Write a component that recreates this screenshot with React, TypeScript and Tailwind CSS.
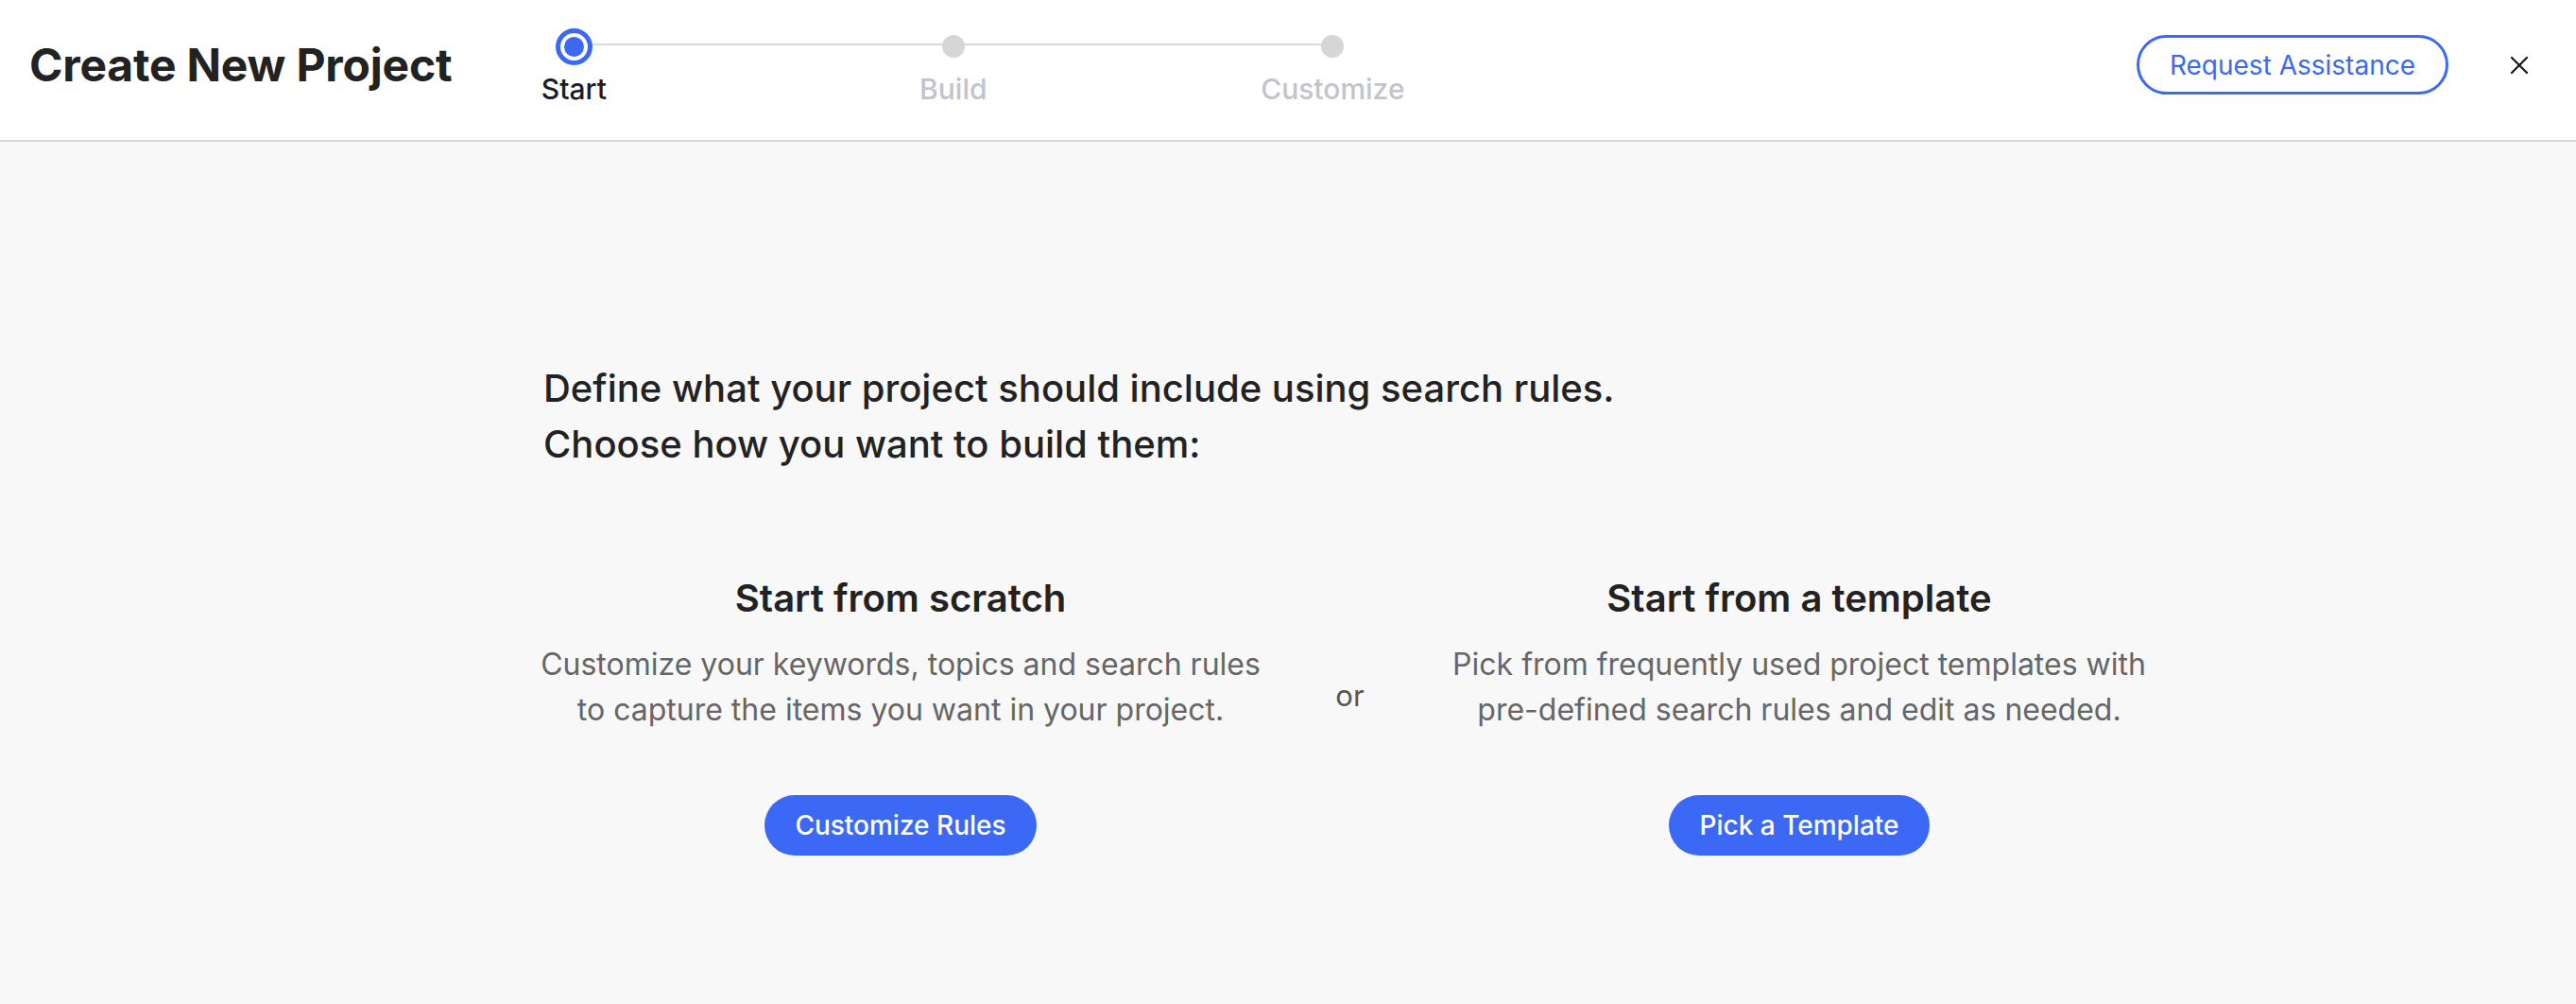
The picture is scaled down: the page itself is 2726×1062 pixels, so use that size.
import { X } from 'lucide-react';

const steps = [
    { id: 'start', label: 'Start', active: true },
    { id: 'build', label: 'Build', active: false },
    { id: 'customize', label: 'Customize', active: false }
];

const options = [
    {
        id: 'scratch',
        title: 'Start from scratch',
        lines: ['Customize your keywords, topics and search rules', 'to capture the items you want in your project.'],
        action: 'Customize Rules'
    },
    {
        id: 'template',
        title: 'Start from a template',
        lines: ['Pick from frequently used project templates with', 'pre-defined search rules and edit as needed.'],
        action: 'Pick a Template'
    }
];

function Stepper() {
    return (
        <div className="relative ml-[59px] flex w-[943px] justify-between pt-[4px]">
            <span className="absolute left-[70px] right-[70px] top-[21px] h-[2px] bg-[#dadada]" aria-hidden="true" />
            {steps.map((step) => (
                <div key={step.id} className="relative flex w-[140px] flex-col items-center">
                    <div className="flex h-[40px] items-center justify-center">
                        {step.active ? (
                            <span className="flex h-[39px] w-[39px] items-center justify-center rounded-full border-[5px] border-[#3b69f5] bg-white">
                                <span className="h-[21px] w-[21px] rounded-full bg-[#3b69f5]" />
                            </span>
                        ) : (
                            <span className="h-[24px] w-[24px] rounded-full bg-[#d6d6d6]" />
                        )}
                    </div>
                    <span
                        className={`mt-[7px] text-[30px] leading-[36px] font-medium ${
                            step.active ? 'text-[#1c1c28]' : 'text-[#c3c3cb]'
                        }`}
                    >
                        {step.label}
                    </span>
                </div>
            ))}
        </div>
    );
}

export default function App() {
    return (
        <div className="flex min-h-[1062px] flex-col bg-[#f8f8f8] font-['Inter',sans-serif] text-[#222222]">
            <header className="flex h-[150px] items-center border-b-2 border-[#d9d9d9] bg-white pb-[11px] pl-[31px] pr-[42px]">
                <h1 className="text-[48px] leading-[56px] font-bold tracking-[-0.2px] text-[#222222]">Create New Project</h1>
                <Stepper />
                <div className="ml-auto flex items-center">
                    <button className="h-[63px] rounded-full border-[3px] border-[#3b69f5] px-[32px] text-[28px] leading-[34px] text-[#3b69f5]">
                        Request Assistance
                    </button>
                    <button className="ml-[57px] flex h-[36px] w-[36px] items-center justify-center text-[#1a1a1a]">
                        <X className="h-[32px] w-[32px]" strokeWidth={1.7} />
                    </button>
                </div>
            </header>

            <main className="flex flex-1 flex-col pl-[575px] pt-[231px]">
                <p className="text-[40px] leading-[59px] font-medium text-[#222222]">
                    Define what your project should include using search rules.
                    <br />
                    Choose how you want to build them:
                </p>

                <div className="mt-[110px] flex w-[1707px]">
                    {options.map((option, idx) => (
                        <div key={option.id} className="contents">
                            {idx === 1 ? (
                                <div className="flex w-[195px] justify-center pt-[103px]">
                                    <span className="text-[31px] leading-[48px] text-[#555555]">or</span>
                                </div>
                            ) : null}
                            <div className="flex w-[756px] flex-col items-center text-center">
                                <h2 className="text-[40px] leading-[48px] font-semibold text-[#222222]">{option.title}</h2>
                                <p className="mt-[22px] whitespace-nowrap text-[32px] leading-[48px] text-[#666666]">
                                    {option.lines[0]}
                                    <br />
                                    {option.lines[1]}
                                </p>
                                <button className="mt-[66px] h-[64px] rounded-full bg-[#3b69f5] px-[32px] text-[28px] leading-[34px] font-medium text-white">
                                    {option.action}
                                </button>
                            </div>
                        </div>
                    ))}
                </div>
            </main>
        </div>
    );
}
